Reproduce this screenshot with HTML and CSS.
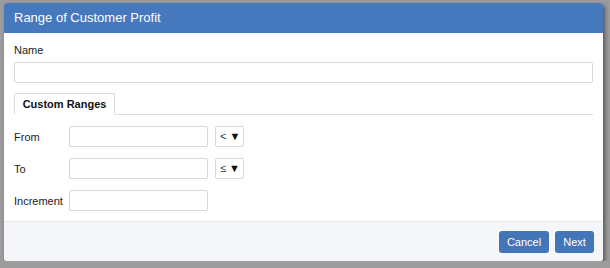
FILE: index.html
```html
<!DOCTYPE html>
<html lang="en">
<head>
    <meta charset="UTF-8">
    <title>Range of Customer Profit</title>
    <link rel="stylesheet" href="styles.css">
</head>
<body>
    <div class="dialog">
        <div class="dialog-header">Range of Customer Profit</div>
        <div class="dialog-body">
            <label class="field-label">Name</label>
            <input class="text-input name-input" type="text">
            <div class="tabs">
                <div class="tab active">Custom Ranges</div>
            </div>
            <div class="range-row">
                <span class="row-label">From</span>
                <input class="text-input small-input" type="text">
                <div class="op-select">&lt; <span class="caret">&#9660;</span></div>
            </div>
            <div class="range-row">
                <span class="row-label">To</span>
                <input class="text-input small-input" type="text">
                <div class="op-select">&le; <span class="caret">&#9660;</span></div>
            </div>
            <div class="range-row">
                <span class="row-label">Increment</span>
                <input class="text-input small-input" type="text">
            </div>
        </div>
        <div class="dialog-footer">
            <button class="btn cancel">Cancel</button>
            <button class="btn next">Next</button>
        </div>
    </div>
</body>
</html>
```

FILE: styles.css
```css
body {
    margin: 0;
    padding: 3px 0 0 4px;
    background-color: #9c9c9c;
    font-family: "Liberation Sans", Arial, sans-serif;
    font-size: 11px;
    color: #222;
}
.dialog {
    width: 599px;
    height: 258px;
    background: white;
    border-radius: 3px;
    box-shadow: 2px 2px 4px rgba(0, 0, 0, 0.45);
    display: flex;
    flex-direction: column;
    overflow: hidden;
}
.dialog-header {
    height: 30px;
    line-height: 30px;
    padding-left: 10px;
    background-color: #4678bd;
    color: white;
    font-size: 13px;
}
.dialog-body {
    flex: 1;
    padding: 9px 10px 0 10px;
}
.field-label {
    display: block;
    line-height: 16px;
    margin-bottom: 4px;
}
.text-input {
    box-sizing: border-box;
    height: 21px;
    border: 1px solid #d8d8d8;
    border-radius: 2px;
    margin: 0;
    padding: 0 4px;
    font-family: inherit;
    font-size: 11px;
}
.name-input {
    display: block;
    width: 579px;
}
.tabs {
    margin-top: 10px;
    border-bottom: 1px solid #dcdcdc;
    display: flex;
}
.tab {
    box-sizing: border-box;
    width: 101px;
    height: 22px;
    line-height: 20px;
    margin-bottom: -1px;
    border: 1px solid #dcdcdc;
    border-bottom-color: white;
    border-radius: 2px 2px 0 0;
    text-align: center;
    font-weight: bold;
    color: #111;
}
.range-row {
    display: flex;
    align-items: center;
    margin-top: 11px;
}
.row-label {
    width: 55px;
}
.small-input {
    width: 139px;
}
.op-select {
    box-sizing: border-box;
    width: 29px;
    height: 21px;
    line-height: 19px;
    margin-left: 7px;
    border: 1px solid #d8d8d8;
    border-radius: 2px;
    padding-left: 4px;
    font-size: 11px;
    color: #333;
}
.caret {
    font-size: 11px;
    color: #111;
}
.dialog-footer {
    height: 40px;
    border-top: 1px solid #e6e9ee;
    background-color: #f5f6fa;
    display: flex;
    justify-content: flex-end;
    align-items: flex-start;
    gap: 6px;
    padding: 9px 9px 0 0;
    box-sizing: border-box;
}
.btn {
    height: 22px;
    padding: 0;
    border: none;
    border-radius: 3px;
    background-color: #4375b9;
    color: white;
    font-family: inherit;
    font-size: 11px;
}
.cancel {
    width: 50px;
}
.next {
    width: 39px;
}
```
